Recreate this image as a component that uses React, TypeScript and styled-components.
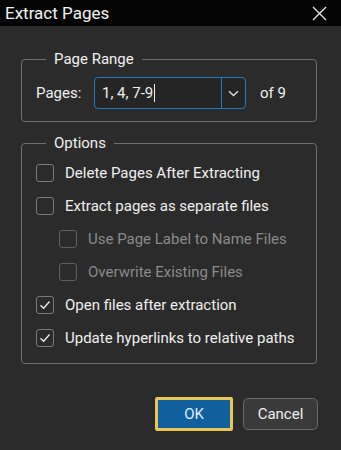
import { createGlobalStyle } from "styled-components";
import styled from "styled-components";

const GlobalStyle = createGlobalStyle`
  html, body {
    margin: 0;
    padding: 0;
    background: #2b2b2b;
  }
  body {
    font-family: Roboto, "Liberation Sans", sans-serif;
    color: #f0f0f0;
  }
`;

const Dialog = styled.div`
  width: 341px;
  height: 450px;
  background: #2b2b2b;
  display: flex;
  flex-direction: column;
  overflow: hidden;
`;

const TitleBar = styled.div`
  height: 26px;
  background: #050505;
  display: flex;
  align-items: center;
  justify-content: space-between;
  padding: 0 14px 0 5px;
`;

const Title = styled.div`
  font-size: 17px;
  color: #f2f2f2;
`;

const CloseIcon = styled.svg`
  width: 15px;
  height: 15px;
  display: block;
`;

const Body = styled.div`
  flex: 1;
  padding: 24px 24px 0 21px;
  display: flex;
  flex-direction: column;
`;

const Group = styled.fieldset<{ $height: number }>`
  margin: 0;
  border: 1px solid #6f6f6f;
  border-radius: 4px;
  padding: 0 14px;
  height: ${(p) => p.$height}px;
  box-sizing: border-box;
  & + & {
    margin-top: 12px;
  }
`;

const Legend = styled.legend`
  font-size: 15px;
  color: #f0f0f0;
  margin-left: 10px;
  padding: 0 8px 0 8px;
  line-height: 18px;
`;

const PagesRow = styled.div`
  display: flex;
  align-items: center;
  margin-top: 9px;
`;

const Label = styled.span`
  font-size: 15px;
  width: 58px;
`;

const Combo = styled.div`
  width: 152px;
  height: 32px;
  box-sizing: border-box;
  border: 1px solid #1f7ac0;
  border-radius: 4px;
  display: flex;
  align-items: stretch;
  background: #252525;
`;

const ComboText = styled.div`
  flex: 1;
  display: flex;
  align-items: center;
  padding-left: 7px;
  font-size: 15px;
  border-right: 1px solid #1f7ac0;
`;

const Caret = styled.span`
  display: inline-block;
  width: 1px;
  height: 18px;
  background: #f0f0f0;
  margin-left: 1px;
`;

const ComboButton = styled.div`
  width: 23px;
  display: flex;
  align-items: center;
  justify-content: center;
`;

const OfText = styled.span`
  font-size: 15px;
  margin-left: 14px;
`;

const OptionList = styled.div`
  display: flex;
  flex-direction: column;
  gap: 15px;
  padding-top: 12px;
`;

const Option = styled.label<{ $indent?: boolean; $disabled?: boolean }>`
  display: flex;
  align-items: center;
  height: 18px;
  padding-left: ${(p) => (p.$indent ? 23 : 0)}px;
  font-size: 15px;
  color: ${(p) => (p.$disabled ? "#8a8a8a" : "#f0f0f0")};
`;

const Box = styled.span<{ $disabled?: boolean }>`
  width: 18px;
  height: 18px;
  box-sizing: border-box;
  border: 1px solid ${(p) => (p.$disabled ? "#5f5f5f" : "#7a7a7a")};
  border-radius: 3px;
  margin-right: 11px;
  display: flex;
  align-items: center;
  justify-content: center;
`;

const Footer = styled.div`
  display: flex;
  justify-content: flex-end;
  gap: 10px;
  padding-top: 33px;
  margin-right: -1px;
`;

const Button = styled.button<{ $primary?: boolean }>`
  font-family: Roboto, "Liberation Sans", sans-serif;
  font-size: 15px;
  box-sizing: border-box;
  color: ${(p) => (p.$primary ? "#dfeefa" : "#f0f0f0")};
  background: ${(p) => (p.$primary ? "#125f9d" : "#3a3a3a")};
  border: ${(p) => (p.$primary ? "3px solid #e8c658" : "1px solid #6a6a6a")};
  border-radius: ${(p) => (p.$primary ? "2px" : "5px")};
  width: ${(p) => (p.$primary ? 78 : 75)}px;
  height: ${(p) => (p.$primary ? 34 : 32)}px;
  margin-top: ${(p) => (p.$primary ? 0 : 1)}px;
  padding: 0;
`;

const Check = () => (
  <svg width="12" height="10" viewBox="0 0 12 10">
    <path d="M1.5 5.2 L4.6 8.2 L10.5 1.5" fill="none" stroke="#f0f0f0" strokeWidth="1.3" />
  </svg>
);

const options = [
  { text: "Delete Pages After Extracting" },
  { text: "Extract pages as separate files" },
  { text: "Use Page Label to Name Files", indent: true, disabled: true },
  { text: "Overwrite Existing Files", indent: true, disabled: true },
  { text: "Open files after extraction", checked: true },
  { text: "Update hyperlinks to relative paths", checked: true },
];

export default function App() {
  return (
    <Dialog>
      <GlobalStyle />
      <TitleBar>
        <Title>Extract Pages</Title>
        <CloseIcon viewBox="0 0 15 15">
          <path d="M1 1 L14 14 M14 1 L1 14" stroke="#e8e8e8" strokeWidth="1.3" />
        </CloseIcon>
      </TitleBar>
      <Body>
        <Group $height={72}>
          <Legend>Page Range</Legend>
          <PagesRow>
            <Label>Pages:</Label>
            <Combo>
              <ComboText>
                1, 4, 7-9
                <Caret />
              </ComboText>
              <ComboButton>
                <svg width="11" height="7" viewBox="0 0 11 7">
                  <path d="M1 1.2 L5.5 5.5 L10 1.2" fill="none" stroke="#e0e0e0" strokeWidth="1.4" />
                </svg>
              </ComboButton>
            </Combo>
            <OfText>of 9</OfText>
          </PagesRow>
        </Group>
        <Group $height={230}>
          <Legend>Options</Legend>
          <OptionList>
            {options.map((o) => (
              <Option key={o.text} $indent={o.indent} $disabled={o.disabled}>
                <Box $disabled={o.disabled}>{o.checked && <Check />}</Box>
                {o.text}
              </Option>
            ))}
          </OptionList>
        </Group>
        <Footer>
          <Button $primary>OK</Button>
          <Button>Cancel</Button>
        </Footer>
      </Body>
    </Dialog>
  );
}
